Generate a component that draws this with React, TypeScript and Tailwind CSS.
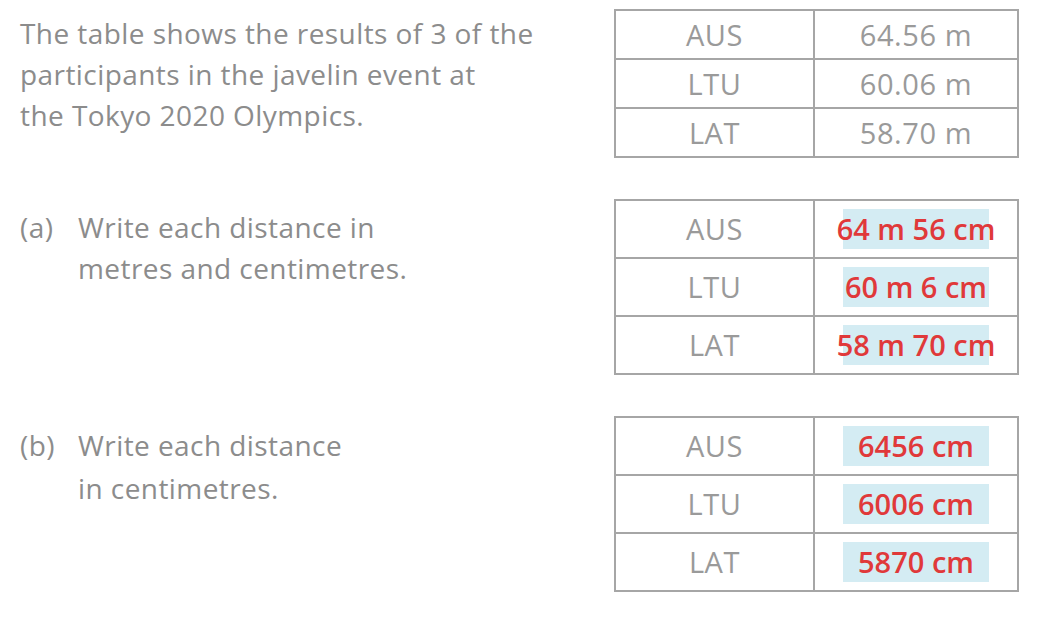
const given = [
  ["AUS", "64.56 m"],
  ["LTU", "60.06 m"],
  ["LAT", "58.70 m"],
];

const partA = [
  ["AUS", "64 m 56 cm"],
  ["LTU", "60 m 6 cm"],
  ["LAT", "58 m 70 cm"],
];

const partB = [
  ["AUS", "6456 cm"],
  ["LTU", "6006 cm"],
  ["LAT", "5870 cm"],
];

function ResultTable({
  rows,
  answers,
  rowH,
}: {
  rows: string[][];
  answers?: boolean;
  rowH: string;
}) {
  return (
    <table className="w-[405px] border-collapse border-2 border-[#a6a6a6] text-[29px] tracking-[0.02em] text-[#9a9a9a]">
      <tbody>
        {rows.map(([country, value]) => (
          <tr key={country} className={rowH}>
            <td className="w-[199px] border-2 border-[#a6a6a6] text-center p-0">
              {country}
            </td>
            <td className="border-2 border-[#a6a6a6] p-0">
              {answers ? (
                <div className="flex justify-center">
                  <span className="w-[146px] h-[40px] bg-[#d4ecf3] text-[#e0393a] text-[29px] font-semibold tracking-[0em] flex items-center justify-center whitespace-nowrap">
                    {value}
                  </span>
                </div>
              ) : (
                <div className="text-center">{value}</div>
              )}
            </td>
          </tr>
        ))}
      </tbody>
    </table>
  );
}

export default function App() {
  return (
    <div
      className="w-[1046px] h-[622px] bg-white pl-[20px] pt-[9px] flex flex-col text-[#8c8c8c] tracking-[0.027em]"
      style={{ fontFamily: "'Open Sans', Lato, sans-serif" }}
    >
      <div className="flex">
        <p className="w-[594px] pt-[4px] text-[28px] leading-[41px]">
          The table shows the results of 3 of the
          <br />
          participants in the javelin event at
          <br />
          the Tokyo 2020 Olympics.
        </p>
        <ResultTable rows={given} rowH="h-[49px]" />
      </div>

      <div className="flex mt-[41px]">
        <div className="w-[594px] pt-[8px] text-[28px] leading-[41px] flex">
          <span className="w-[58px]">(a)</span>
          <span>
            Write each distance in
            <br />
            metres and centimetres.
          </span>
        </div>
        <ResultTable rows={partA} answers rowH="h-[58px]" />
      </div>

      <div className="flex mt-[41px]">
        <div className="w-[594px] pt-[8px] text-[28px] leading-[43px] flex">
          <span className="w-[58px]">(b)</span>
          <span>
            Write each distance
            <br />
            in centimetres.
          </span>
        </div>
        <ResultTable rows={partB} answers rowH="h-[58px]" />
      </div>
    </div>
  );
}
